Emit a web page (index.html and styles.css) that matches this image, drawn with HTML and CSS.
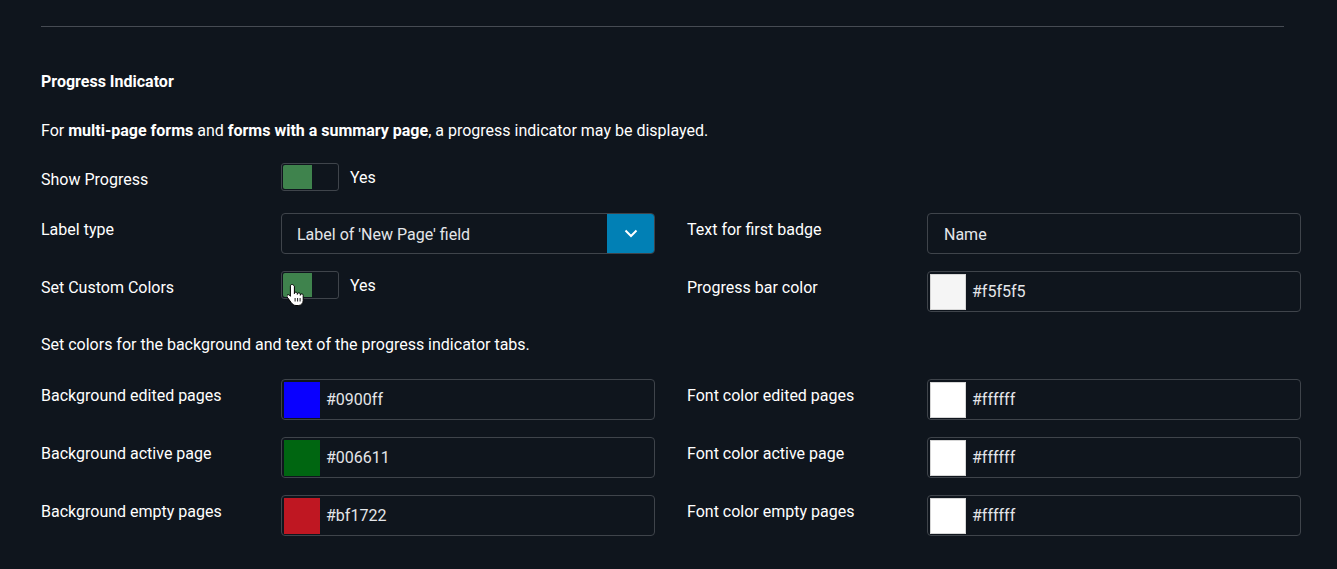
FILE: index.html
```html
<!DOCTYPE html>
<html lang="en">
<head>
  <meta charset="UTF-8">
  <title>Progress Indicator Settings</title>
  <link rel="stylesheet" href="styles.css">
</head>
<body>

<div class="panel">
  <hr class="divider">

  <h3>Progress Indicator</h3>

  <p class="intro">For <b>multi-page forms</b> and <b>forms with a summary page</b>, a progress indicator may be displayed.</p>

  <div class="row row-toggle">
    <div class="half">
      <label class="lbl">Show Progress</label>
      <div class="ctrl">
        <span class="toggle on"><span class="knob"></span></span>
        <span class="toggle-text">Yes</span>
      </div>
    </div>
  </div>

  <div class="row">
    <div class="half">
      <label class="lbl">Label type</label>
      <div class="ctrl">
        <div class="select">
          <span class="select-value">Label of 'New Page' field</span>
          <span class="select-btn">
            <svg width="14" height="9" viewBox="0 0 14 9"><path d="M1.5 1.5 L7 7 L12.5 1.5" fill="none" stroke="#fff" stroke-width="2"/></svg>
          </span>
        </div>
      </div>
    </div>
    <div class="half">
      <label class="lbl">Text for first badge</label>
      <div class="ctrl">
        <div class="input">Name</div>
      </div>
    </div>
  </div>

  <div class="row">
    <div class="half">
      <label class="lbl">Set Custom Colors</label>
      <div class="ctrl">
        <span class="toggle on"><span class="knob"></span>
          <svg class="cursor" width="18" height="24" viewBox="0 0 18 24">
            <path d="M5 1.5c-1 0-1.6.7-1.6 1.6v10.2l-1-1.1c-.7-.7-1.8-.7-2.3 0-.4.6-.3 1.3.1 1.9l4 5.5c1 1.4 2.4 2.9 4.8 2.9h2.3c2.9 0 4.9-2.2 4.9-5.1v-5c0-.9-.7-1.5-1.5-1.5s-1.4.6-1.4 1.4v-.9c0-.9-.7-1.5-1.5-1.5s-1.5.6-1.5 1.5v-.7c0-.9-.7-1.5-1.5-1.5s-1.4.6-1.4 1.5V3.1C6.6 2.2 6 1.5 5 1.5z" fill="#fff" stroke="#000" stroke-width="1"/>
            <path d="M8.1 15v3.5M10.6 15v3.5M13.1 15v3.5" stroke="#000" stroke-width="0.9"/>
          </svg>
        </span>
        <span class="toggle-text">Yes</span>
      </div>
    </div>
    <div class="half">
      <label class="lbl">Progress bar color</label>
      <div class="ctrl">
        <div class="input color"><span class="swatch light" style="background:#f5f5f5"></span>#f5f5f5</div>
      </div>
    </div>
  </div>

  <p class="note">Set colors for the background and text of the progress indicator tabs.</p>

  <div class="row row-after-note">
    <div class="half">
      <label class="lbl">Background edited pages</label>
      <div class="ctrl">
        <div class="input color"><span class="swatch" style="background:#0900ff"></span>#0900ff</div>
      </div>
    </div>
    <div class="half">
      <label class="lbl">Font color edited pages</label>
      <div class="ctrl">
        <div class="input color"><span class="swatch light" style="background:#ffffff"></span>#ffffff</div>
      </div>
    </div>
  </div>

  <div class="row">
    <div class="half">
      <label class="lbl">Background active page</label>
      <div class="ctrl">
        <div class="input color"><span class="swatch" style="background:#006611"></span>#006611</div>
      </div>
    </div>
    <div class="half">
      <label class="lbl">Font color active page</label>
      <div class="ctrl">
        <div class="input color"><span class="swatch light" style="background:#ffffff"></span>#ffffff</div>
      </div>
    </div>
  </div>

  <div class="row">
    <div class="half">
      <label class="lbl">Background empty pages</label>
      <div class="ctrl">
        <div class="input color"><span class="swatch" style="background:#bf1722"></span>#bf1722</div>
      </div>
    </div>
    <div class="half">
      <label class="lbl">Font color empty pages</label>
      <div class="ctrl">
        <div class="input color"><span class="swatch light" style="background:#ffffff"></span>#ffffff</div>
      </div>
    </div>
  </div>
</div>

</body>
</html>
```

FILE: styles.css
```css
body {
  margin: 0;
  background-color: #0f151d;
  color: #fff;
  font-family: Roboto, "Liberation Sans", sans-serif;
  font-size: 16px;
}
.panel {
  padding: 26px 0 0 41px;
}
.divider {
  margin: 0;
  width: 1243px;
  border: 0;
  border-top: 1px solid #464b53;
}
h3 {
  margin: 46px 0 0;
  font-size: 16px;
  font-weight: 700;
  line-height: 18px;
}
.intro {
  margin: 30px 0 0;
  line-height: 20px;
}
.intro b {
  font-weight: 700;
}
.row {
  display: flex;
  gap: 32px;
  margin-top: 17px;
}
.row-toggle {
  margin-top: 22px;
  height: 33px;
}
.row-after-note {
  margin-top: 24px;
}
.half {
  display: flex;
  width: 614px;
}
.lbl {
  width: 240px;
  flex: none;
  padding-top: 7px;
  line-height: 20px;
}
.ctrl {
  width: 374px;
  display: flex;
  align-items: flex-start;
}
.toggle {
  position: relative;
  display: inline-block;
  width: 56px;
  height: 26px;
  border: 1px solid #3f444b;
  border-radius: 3px;
  background: #0f151d;
}
.toggle .knob {
  display: block;
  width: 29px;
  height: 24px;
  margin: 1px 0 0 1px;
  background: #3f834d;
  border-radius: 2px 0 0 2px;
}
.toggle-text {
  margin-left: 11px;
  line-height: 30px;
}
.cursor {
  position: absolute;
  left: 5px;
  top: 11px;
}
.select {
  display: flex;
  width: 372px;
  height: 39px;
  border: 1px solid #3f444b;
  border-radius: 4px;
  overflow: hidden;
}
.select-value {
  flex: 1;
  padding-left: 15px;
  line-height: 42px;
  color: #e4e6ea;
}
.select-btn {
  width: 47px;
  background: #0180b5;
  display: flex;
  align-items: center;
  justify-content: center;
}
.input {
  width: 356px;
  height: 39px;
  padding-left: 16px;
  border: 1px solid #3f444b;
  border-radius: 4px;
  line-height: 42px;
  color: #e4e6ea;
}
.input.color {
  display: flex;
  align-items: center;
  width: 370px;
  padding-left: 2px;
}
.swatch {
  width: 36px;
  height: 36px;
  margin-right: 6px;
  box-sizing: border-box;
}
.swatch.light {
  border: 1px solid #d6d6d6;
}
.note {
  margin: 23px 0 0;
  line-height: 20px;
}
```
